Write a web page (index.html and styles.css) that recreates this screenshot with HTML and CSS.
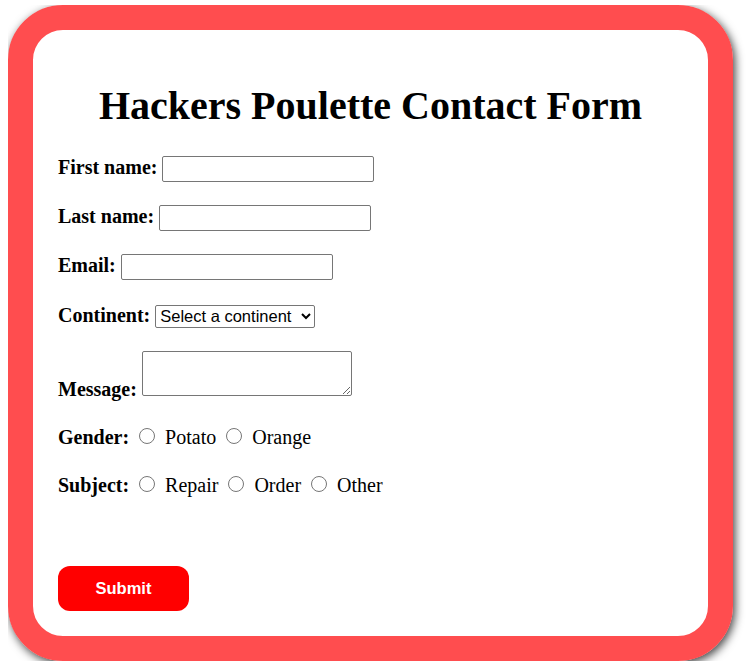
FILE: index.html
```html
<!DOCTYPE html>
<html lang="en">
<head>
    <meta charset="UTF-8">
    <meta name="viewport" content="width=device-width, initial-scale=1.0">
    <title>Hackers Poulette Contact Form</title>
    <link rel="stylesheet" href="styles.css">
</head>
<body>
    <form class="contact-form" onsubmit="return false">
        <h1>Hackers Poulette Contact Form</h1>

        <div class="row">
            <label for="firstname">First name:</label>
            <input id="firstname" class="input-box" type="text">
        </div>

        <div class="row">
            <label for="lastname">Last name:</label>
            <input id="lastname" class="input-box" type="text">
        </div>

        <div class="row">
            <label for="email">Email:</label>
            <input id="email" class="input-box" type="email">
        </div>

        <div class="row select-row">
            <label for="continent">Continent:</label>
            <select id="continent" class="select-box">
                <option value="">Select a continent</option>
                <option value="africa">Africa</option>
                <option value="america">America</option>
                <option value="asia">Asia</option>
                <option value="europe">Europe</option>
                <option value="oceania">Oceania</option>
            </select>
        </div>

        <div class="row">
            <label for="message">Message:</label>
            <textarea id="message" class="text-box"></textarea>
        </div>

        <div class="row radio-row">
            <label>Gender:</label>
            <input id="potato" type="radio" name="gender" value="potato"><span class="choice">Potato</span>
            <input id="orange" type="radio" name="gender" value="orange"><span class="choice">Orange</span>
        </div>

        <div class="row radio-row">
            <label>Subject:</label>
            <input id="repair" type="radio" name="subject" value="repair"><span class="choice">Repair</span>
            <input id="order" type="radio" name="subject" value="order"><span class="choice">Order</span>
            <input id="other" type="radio" name="subject" value="other"><span class="choice">Other</span>
        </div>

        <button class="btn" type="submit">Submit</button>
    </form>
</body>
</html>
```

FILE: styles.css
```css
body {
    margin: 5px 0 0 8px;
    background-color: #fff;
    font-family: "Liberation Serif", "Times New Roman", serif;
    font-size: 20px;
    color: #000;
}
.contact-form {
    width: 625px;
    padding: 25px;
    border: 25px solid #ff4d4f;
    border-radius: 55px;
    box-shadow: 2px 3px 10px rgba(0, 0, 0, 0.75);
}
h1 {
    font-size: 40px;
    text-align: center;
    margin: 27px 0;
}
.row {
    margin-bottom: 23px;
}
.select-row {
    padding-top: 1px;
}
.radio-row {
    padding-top: 2px;
}
label {
    font-weight: bold;
}
.input-box {
    box-sizing: border-box;
    width: 212px;
    height: 26px;
    border: 1px solid #767676;
    border-radius: 2px;
    font-family: "Liberation Sans", Arial, sans-serif;
    font-size: 16px;
}
.select-box {
    box-sizing: border-box;
    width: 160px;
    height: 23px;
    border: 1px solid #767676;
    border-radius: 2px;
    font-family: "Liberation Sans", Arial, sans-serif;
    font-size: 16.5px;
    background-color: #fff;
    color: #000;
}
.text-box {
    box-sizing: border-box;
    width: 210px;
    height: 45px;
    border: 1px solid #767676;
    border-radius: 2px;
    vertical-align: baseline;
}
input[type="radio"] {
    width: 16px;
    height: 16px;
    margin: 0 4px 0 5px;
}
.choice {
    margin-left: 6px;
}
.btn {
    width: 131px;
    height: 45px;
    margin-top: 46px;
    background-color: #ff0000;
    color: #fff;
    border: none;
    border-radius: 12px;
    font-family: "Liberation Sans", Arial, sans-serif;
    font-weight: bold;
    font-size: 16.5px;
    cursor: pointer;
}
```
